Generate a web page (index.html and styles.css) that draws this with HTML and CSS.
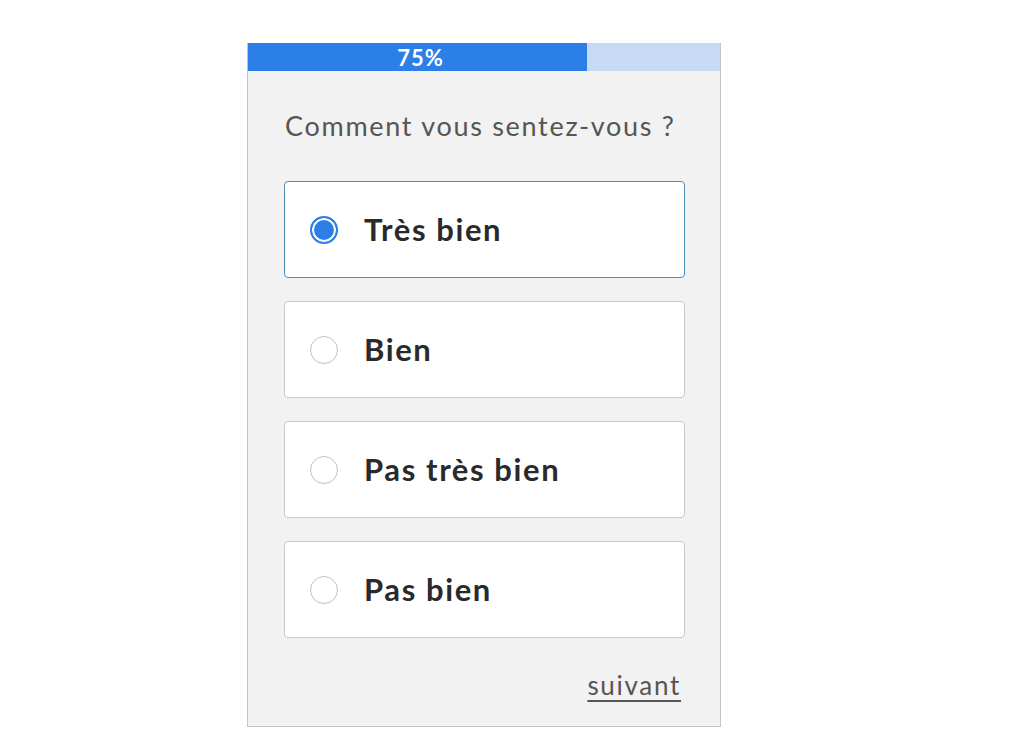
FILE: index.html
```html
<!DOCTYPE html>
<html lang="fr">
<head>
<meta charset="utf-8">
<link rel="stylesheet" href="styles.css">
</head>
<body>
<div class="panel">
  <div class="progress">
    <div class="progress-fill" style="width: 339px"><span>75%</span></div>
  </div>
  <div class="content">
    <p class="question">Comment vous sentez-vous ?</p>
    <div class="options">
      <label class="option selected"><span class="radio"></span><span class="label">Très bien</span></label>
      <label class="option"><span class="radio"></span><span class="label">Bien</span></label>
      <label class="option"><span class="radio"></span><span class="label">Pas très bien</span></label>
      <label class="option"><span class="radio"></span><span class="label">Pas bien</span></label>
    </div>
    <div class="footer"><a class="next" href="#">suivant</a></div>
  </div>
</div>
</body>
</html>
```
FILE: styles.css
```css
* { box-sizing: border-box; }
html, body { margin: 0; padding: 0; background: #ffffff; }
body { font-family: Lato, "Noto Sans", sans-serif; }

.panel {
  margin: 43px 0 0 247px;
  width: 474px;
  height: 684px;
  background: #f2f2f2;
  border: 1px solid #c4c4c4;
  border-top: none;
  display: flex;
  flex-direction: column;
}

.progress {
  height: 28px;
  background: #c6dbf3;
  display: flex;
}
.progress-fill {
  background: #2c7fe6;
  height: 100%;
  display: flex;
  align-items: center;
  justify-content: center;
}
.progress-fill span {
  color: #ffffff;
  font-size: 22px;
  font-weight: 700;
  letter-spacing: 1px;
  padding-left: 6px;
}

.content {
  padding: 0 35px 0 36px;
  display: flex;
  flex-direction: column;
  flex: 1;
}

.question {
  margin: 38px 0 0 1px;
  font-size: 27px;
  line-height: 34px;
  color: #555555;
  font-weight: 400;
  letter-spacing: 1.7px;
}

.options {
  margin-top: 38px;
  display: flex;
  flex-direction: column;
  gap: 23px;
}

.option {
  height: 97px;
  background: #ffffff;
  border: 1px solid #c8c8c8;
  border-radius: 4px;
  display: flex;
  align-items: center;
  padding-left: 25px;
  gap: 26px;
}
.option.selected {
  border-color: #4f8db8;
}

.radio {
  width: 28px;
  height: 28px;
  border-radius: 50%;
  border: 1px solid #c2c2c2;
  background: #ffffff;
  flex: none;
}
.option.selected .radio {
  border: 2px solid #2c7fe6;
  background: #2c7fe6;
  box-shadow: inset 0 0 0 2px #ffffff;
}

.label {
  font-size: 31px;
  font-weight: 700;
  color: #2a2a2a;
  letter-spacing: 1.6px;
  padding-bottom: 2px;
}

.footer {
  display: flex;
  justify-content: flex-end;
  margin-top: 31px;
  padding-right: 4px;
}
.next {
  font-size: 26px;
  color: #555555;
  letter-spacing: 1.7px;
  text-decoration: underline;
  text-underline-offset: 5px;
  text-decoration-thickness: 2px;
}
```
